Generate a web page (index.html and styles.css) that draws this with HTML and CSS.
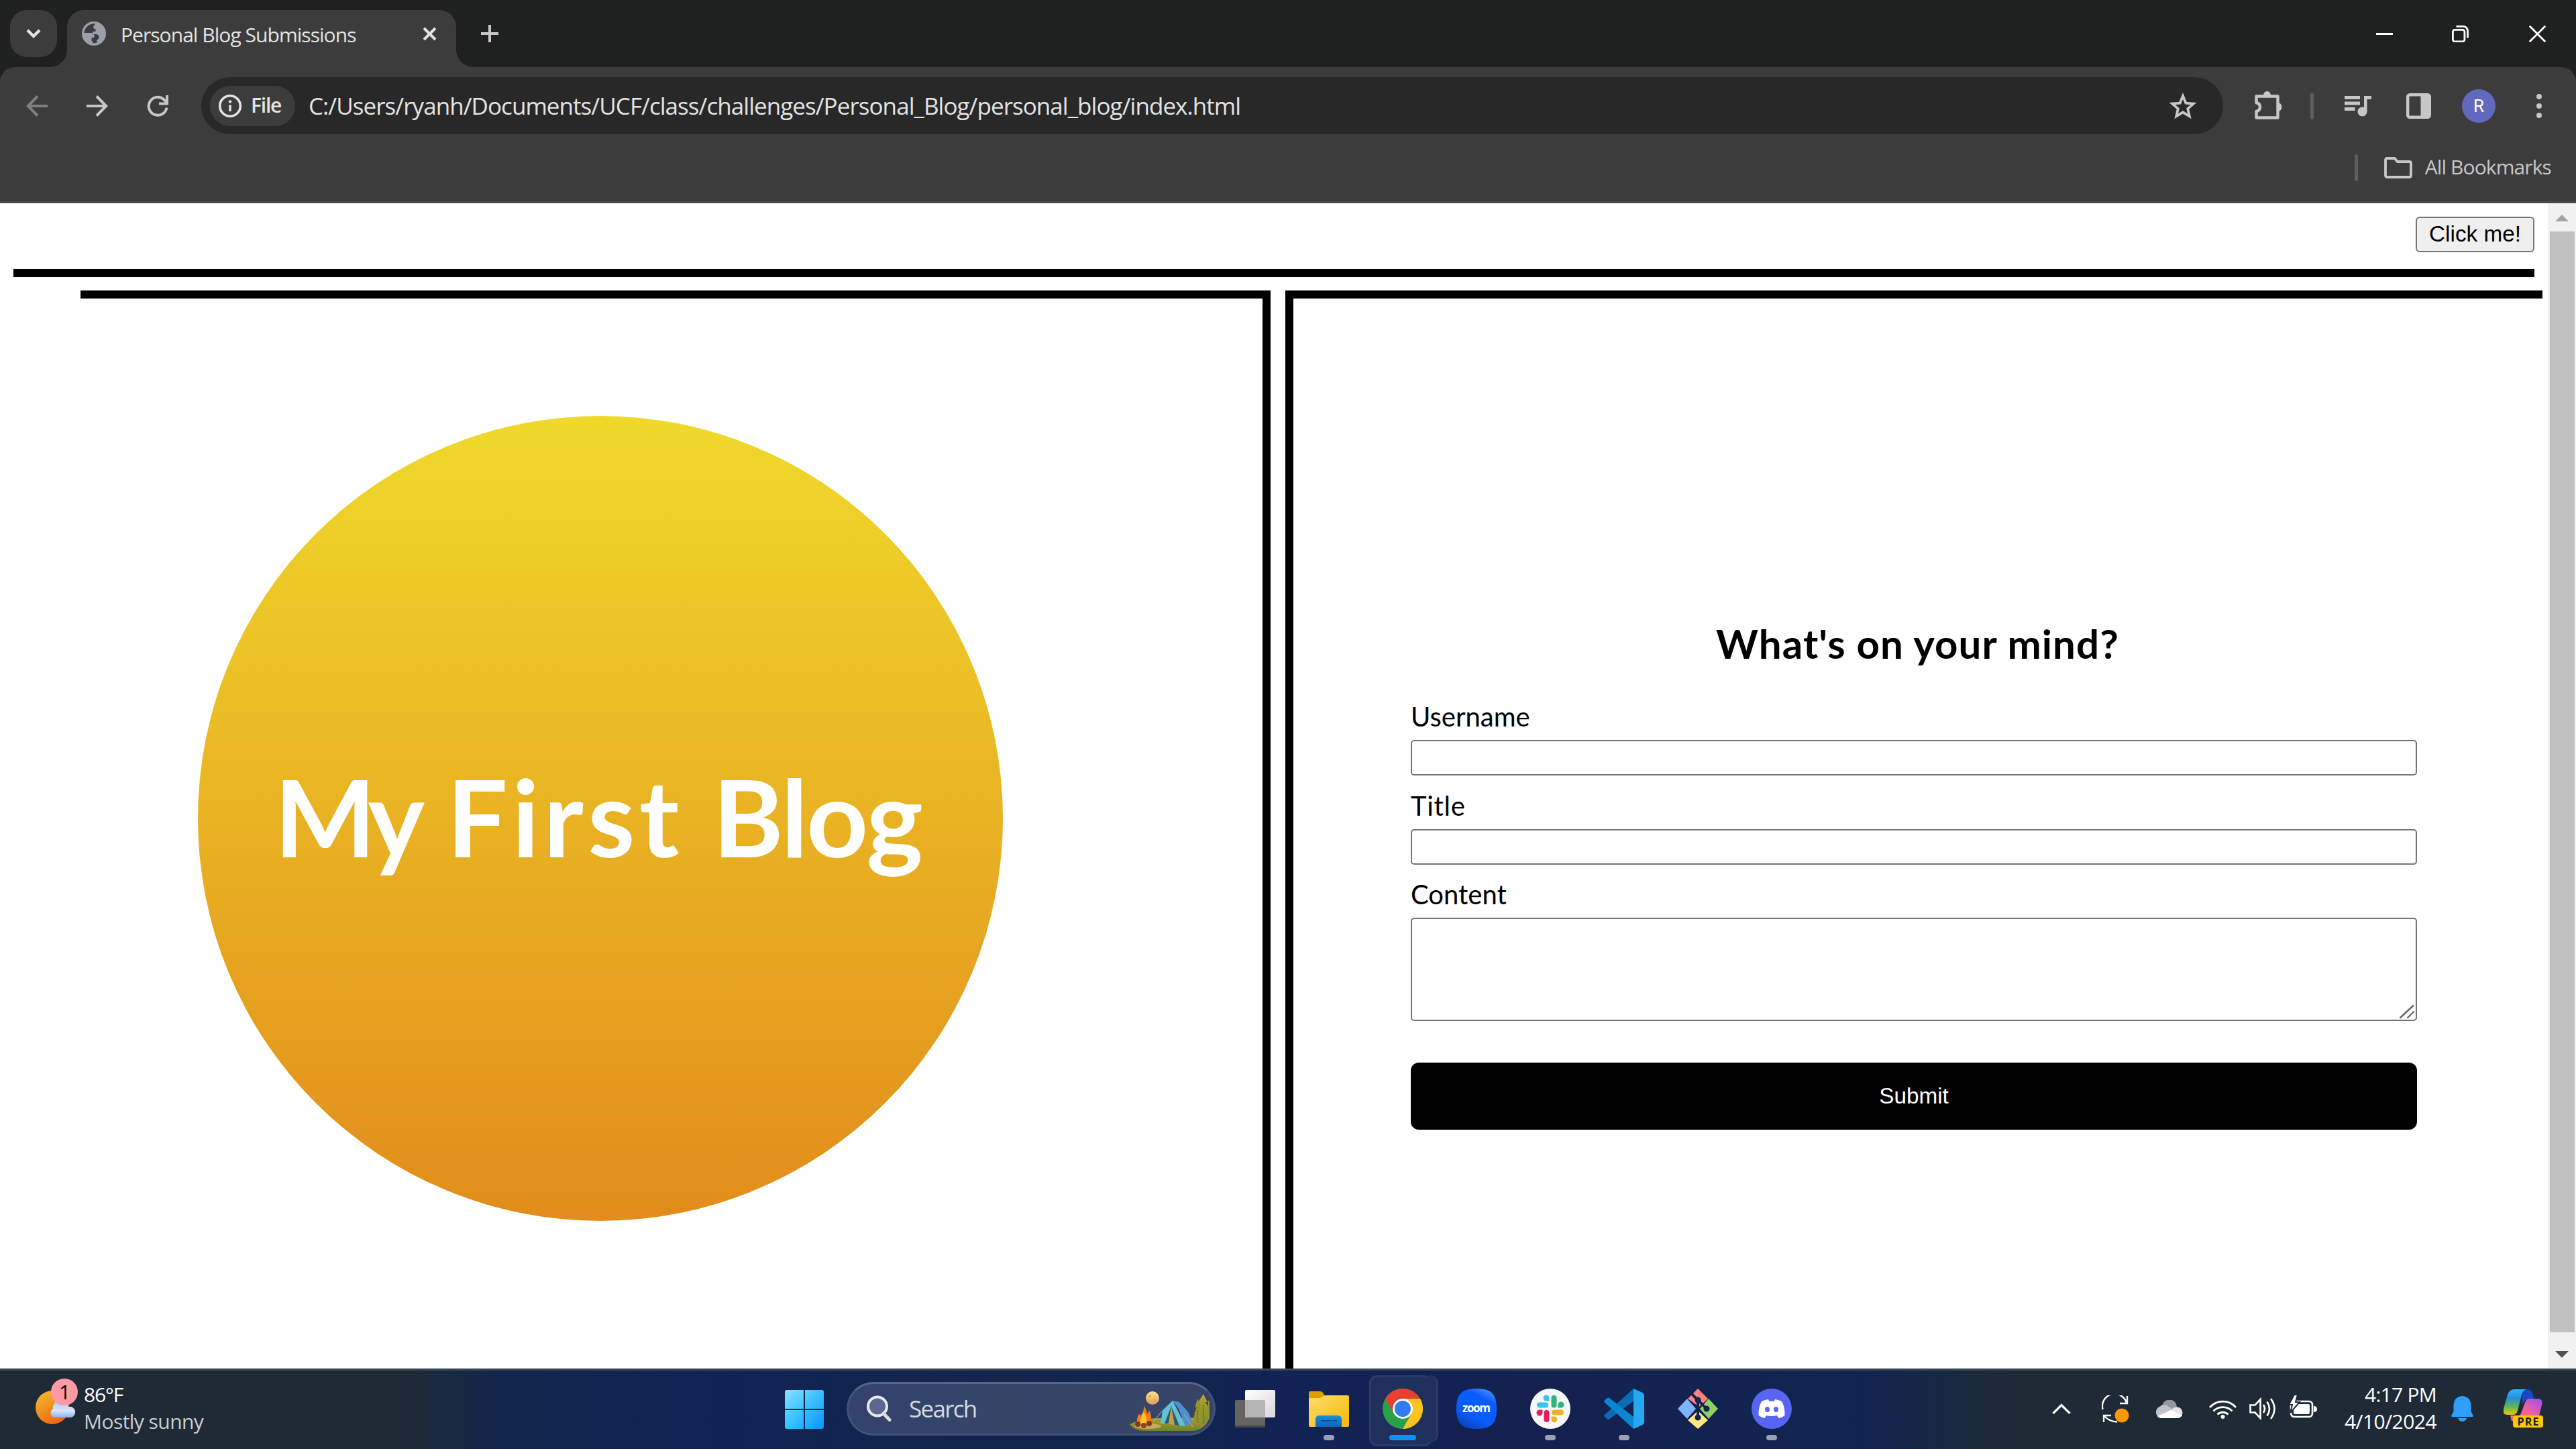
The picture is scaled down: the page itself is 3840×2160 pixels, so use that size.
FILE: index.html
```html
<!DOCTYPE html>
<html lang="en">
<head>
<meta charset="utf-8">
<title>Personal Blog Submissions</title>
<link rel="stylesheet" href="styles.css">
</head>
<body>
<div class="tabstrip">
  <div class="tab-search"><svg width="24" height="18" viewBox="0 0 24 18"><path d="M3 4l9 9 9-9" fill="none" stroke="#e3e3e3" stroke-width="4.4"/></svg></div>
  <div class="tab">
    <svg class="globe" width="36" height="36" viewBox="0 0 36 36"><circle cx="18" cy="18" r="18" fill="#9aa0a8"/><path d="M20 3.5A14.500 14.500 0 0 0 3.500 17h9c4 0 6 2 6 5v2h-4v4.500l3 4c2 0 4-.5 5.500-1.200l-1-3.300c2.500-1 4-3 3.500-5.500-.5-2-2-3-4-3.500h-5.500v-4h4.500V11h-1c-2 0-3-2-2-4z" fill="#3c3c3c"/><path d="M4 18.500h8c3 0 4.500 1.500 4.500 4h-4v5.500l3.500 4.500A14.500 14.500 0 0 1 4 18.500z" fill="#9aa0a8"/></svg>
    <span class="tab-title">Personal Blog Submissions</span>
    <svg class="tab-close" width="21" height="21" viewBox="0 0 21 21"><path d="M2 2l17 17M19 2L2 19" stroke="#e3e3e3" stroke-width="4"/></svg>
  </div>
  <svg class="new-tab" width="26" height="26" viewBox="0 0 26 26"><path d="M13 0v26M0 13h26" stroke="#c7c7c7" stroke-width="4"/></svg>
  <div class="window-buttons">
    <span class="minimize"><svg width="25" height="25" viewBox="0 0 25 25"><path d="M0 12.500h25" stroke="#fff" stroke-width="3"/></svg></span>
    <span><svg width="25" height="25" viewBox="0 0 25 25" fill="none" stroke="#fff" stroke-width="2.800"><rect x="1.400" y="6.400" width="17.500" height="17.500" rx="3"/><path d="M6.500 1.400H17a6.500 6.500 0 0 1 6.500 6.500V18.500"/></svg></span>
    <span><svg width="25" height="25" viewBox="0 0 25 25"><path d="M.8.8l23.400 23.400M24.200.8L.8 24.200" stroke="#fff" stroke-width="2.800"/></svg></span>
  </div>
</div>
<div class="toolbar">
  <div class="nav-row">
    <span class="tool"><svg width="32" height="32" viewBox="0 0 32 32" fill="none" stroke="#7f7f7f" stroke-width="4"><path d="M32 16H3M17 1.500L2.800 16 17 30.500"/></svg></span>
    <span class="tool"><svg width="32" height="32" viewBox="0 0 32 32" fill="none" stroke="#c7c7c7" stroke-width="4"><path d="M0 16h29M15 1.500L29.200 16 15 30.500"/></svg></span>
    <span class="tool"><svg width="32" height="32" viewBox="0 0 32 32" fill="none" stroke="#c7c7c7" stroke-width="4"><path d="M29.500 18.500A13.500 13.500 0 1 1 25.500 6.500l4 4"/><path d="M30 0v12.500H18"/></svg></span>
    <div class="omnibox">
      <div class="chip">
        <svg width="36" height="36" viewBox="0 0 36 36"><circle cx="18" cy="18" r="15.300" fill="none" stroke="#e3e3e3" stroke-width="3.600"/><path d="M18 16.500v9.500" stroke="#e3e3e3" stroke-width="3.600"/><circle cx="18" cy="11.500" r="2.200" fill="#e3e3e3"/></svg>
        <span>File</span>
      </div>
      <span class="url">C:/Users/ryanh/Documents/UCF/class/challenges/Personal_Blog/personal_blog/index.html</span>
      <svg class="star" width="42" height="40" viewBox="0 0 42 40"><path d="M21 5l4.400 10.600 11.400 1-8.600 7.500 2.600 11.200L21 29.300l-9.800 6 2.600-11.200-8.600-7.500 11.400-1z" fill="none" stroke="#c7c7c7" stroke-width="3.800"/></svg>
    </div>
    <span class="tool puzzle"><svg width="42" height="44" viewBox="0 0 42 44"><path d="M2.500 9.500h32V21v20.500h-32V32c4-1 5.500-3.500 5.500-6.500s-1.500-5.500-5.500-6.500z" fill="none" stroke="#c7c7c7" stroke-width="4.400" stroke-linejoin="round"/><path d="M13 8a5.500 6 0 0 1 11 0zM35 19a5.500 6.500 0 0 1 0 13z" fill="#c7c7c7"/></svg></span>
    <i class="divider"></i>
    <span class="tool"><svg width="40" height="32" viewBox="0 0 40 32" fill="#c7c7c7"><path d="M0 1h23v5H0zM0 9.500h23v5H0zM0 18h15.500v5H0zM29 1h11v5h-6.500v18H29z"/><circle cx="26.500" cy="24.500" r="7"/></svg></span>
    <span class="tool"><svg width="37" height="38" viewBox="0 0 37 38"><rect x="2.200" y="2.200" width="32.600" height="33.600" rx="3" fill="none" stroke="#c7c7c7" stroke-width="4.400"/><path d="M21.500 2h13v34h-13z" fill="#c7c7c7"/></svg></span>
    <span class="tool"><span class="avatar">R</span></span>
    <span class="tool"><svg width="8" height="36" viewBox="0 0 8 36" fill="#c7c7c7"><circle cx="4" cy="4" r="4"/><circle cx="4" cy="18" r="4"/><circle cx="4" cy="32" r="4"/></svg></span>
  </div>
  <div class="bookmarks">
    <i class="divider"></i>
    <svg width="42" height="32" viewBox="0 0 42 32"><path d="M2 4.500Q2 2 4.500 2h11l4.500 5h17.500Q40 7 40 9.500v18q0 2.500-2.500 2.500h-33Q2 30 2 27.500z" fill="none" stroke="#c7c7c7" stroke-width="3.800"/></svg>
    <span>All Bookmarks</span>
  </div>
</div>
<div class="viewport">
  <div class="page">
    <header class="page-header"><button class="mode">Click me!</button></header>
    <main class="columns">
      <section class="hero"><div class="circle"><h1><span class="w1">My</span> <span class="w2">First</span> <span class="w3">Blog</span></h1></div></section>
      <section class="form">
        <h2>What's on your mind?</h2>
        <label for="user">Username</label>
        <input id="user" type="text">
        <label for="title" class="ls-title">Title</label>
        <input id="title" type="text">
        <label for="content">Content</label>
        <div class="area"><textarea id="content"></textarea><svg width="24" height="22" viewBox="0 0 24 22"><path d="M1.500 20.500L22 1.500M12.500 20.500L23 10.500" stroke="#666" stroke-width="2.400"/></svg></div>
        <button class="submit">Submit</button>
      </section>
    </main>
  </div>
  <div class="scrollbar">
    <svg width="20" height="10" viewBox="0 0 20 10"><path d="M10 0l10 10H0z" fill="#a3a3a3"/></svg>
    <div class="thumb"></div>
    <svg width="20" height="10" viewBox="0 0 20 10"><path d="M0 0h20L10 10z" fill="#505050"/></svg>
  </div>
</div>
<div class="taskbar">
  <div class="weather">
    <svg width="70" height="80" viewBox="0 0 70 80">
      <defs><linearGradient id="sun" x1="0" y1="0" x2=".6" y2="1"><stop offset="0" stop-color="#f0c232"/><stop offset="1" stop-color="#f06410"/></linearGradient><linearGradient id="cl" x1="0" y1="0" x2="0" y2="1"><stop offset="0" stop-color="#a8c4f4"/><stop offset=".6" stop-color="#dbe6fa"/><stop offset="1" stop-color="#8fb0ee"/></linearGradient></defs>
      <circle cx="28" cy="48" r="25" fill="url(#sun)"/>
      <path d="M30 63a7.500 7.500 0 0 1-1-13 11 11 0 0 1 23-3 8 8 0 0 1 4 16z" fill="url(#cl)"/>
      <circle cx="46" cy="25" r="20" fill="#ff9aa4"/>
      <text x="38" y="36" class="badge">1</text>
    </svg>
    <div class="lines"><span class="temp">86°F</span><span class="cond">Mostly sunny</span></div>
  </div>
  <svg class="start" width="58" height="58" viewBox="0 0 58 58"><defs><linearGradient id="wn" x1="0" y1="0" x2="1" y2="1"><stop offset="0" stop-color="#8ae0ff"/><stop offset=".45" stop-color="#3fc4ff"/><stop offset="1" stop-color="#0a94ff"/></linearGradient></defs><path d="M3 0h25v28H0V3Q0 0 3 0zM30 0h25q3 0 3 3v25H30zM0 30h28v28H3q-3 0-3-3zM30 30h28v25q0 3-3 3H30z" fill="url(#wn)"/></svg>
  <div class="search">
    <svg width="38" height="40" viewBox="0 0 38 40"><circle cx="17" cy="16.500" r="14" fill="#5a6890" stroke="#e8eaf0" stroke-width="4"/><path d="M26 27l9 9.500" stroke="#d8dbe4" stroke-width="5" stroke-linecap="round"/></svg>
    <span>Search</span>
    <svg class="art" width="132" height="76" viewBox="0 2 132 76">
      <defs><linearGradient id="gr" x1="0" y1="0" x2="0" y2="1"><stop offset="0" stop-color="#b89a3c"/><stop offset="1" stop-color="#6a8428"/></linearGradient><linearGradient id="tr" x1="0" y1="0" x2="0" y2="1"><stop offset="0" stop-color="#b0a42c"/><stop offset="1" stop-color="#7d8c2c"/></linearGradient><linearGradient id="mo" x1="0" y1="0" x2="0" y2="1"><stop offset="0" stop-color="#ffe08a"/><stop offset="1" stop-color="#e09a60"/></linearGradient></defs>
      <circle cx="39" cy="24" r="10" fill="url(#mo)"/><circle cx="35" cy="21" r="2" fill="#dca858"/><circle cx="43" cy="28" r="2" fill="#dca858"/>
      <path d="M5 63Q24 54 50 54t74-1Q120 64 112 69 106 73 98 73H28Q12 73 5 63z" fill="url(#gr)"/>
      <ellipse cx="32" cy="66" rx="20" ry="4" fill="#c8a860"/>
      <path d="M115 18l6 12h-3l6 12h-1l1 8q-2 7-7 12l-17-2 2-8h-2l6-11h-2l5-11h-2z" fill="url(#tr)"/>
      <path d="M106 25l5 10h-2l4 9h-2l3 16h-14l2-13h-1l4-9h-3zM122 28l2 0v26l-4-2z" fill="#929328"/>
      <path d="M115 62V34M106 60V42" stroke="#6e7a1c" stroke-width="1.500"/>
      <path d="M26 35q5 8 5 13 3-3 3-6 5 10 2 17l-5 6H20q-5-4-4-10 1-5 4-8l1 4q6-8 5-16z" fill="#f57a14"/><path d="M26 45q6 9 4 17h-9q-1-9 5-17z" fill="#ffc22e"/>
      <circle cx="17" cy="63" r="4" fill="#7c3d1c"/><circle cx="26" cy="65" r="4" fill="#8a4520"/><circle cx="34" cy="62" r="4" fill="#7c3d1c"/>
      <path d="M69 28l-15 14-3 19 6 1 13-22 10 25 8 1z" fill="#3fb0c8"/><path d="M69 28l10 2 14 16 5 14-10 6-10-26z" fill="#4a90cc"/><path d="M69 28l19 38-12-2-9-28-10 27-6-1 4-20z" fill="#62c0d8"/><path d="M67 36L57 62l22 3z" fill="#c0a04c"/><path d="M67 36l-10 26 6 0zM67 36l5 28 7 1z" fill="#2c5c70"/>
      <path d="M54 43L40 59M86 48l13 19" stroke="#aeb4b8" stroke-width="1"/>
    </svg>
  </div>
  <div class="apps">
    <span class="app"><svg width="60" height="56" viewBox="0 0 60 56"><defs><linearGradient id="tv" x1="0" y1="0" x2="1" y2="1"><stop offset="0" stop-color="#fff"/><stop offset="1" stop-color="#d9d9d9"/></linearGradient></defs><rect y="15" width="45" height="41" rx="2" fill="#646464"/><path d="M0 53h45v1q0 2-2 2H2q-2 0-2-2z" fill="#484848"/><rect x="15" width="45" height="41" rx="2" fill="url(#tv)"/><path d="M15 15h28q2 0 2 2v24H17q-2 0-2-2z" fill="#b4b4b4"/></svg></span>
    <span class="app"><svg width="60" height="53" viewBox="0 0 60 53"><defs><linearGradient id="fx" x1="0" y1="0" x2="1" y2="1"><stop offset="0" stop-color="#ffdc70"/><stop offset="1" stop-color="#f8b808"/></linearGradient><linearGradient id="fb" x1="0" y1="0" x2="0" y2="1"><stop offset="0" stop-color="#1890dc"/><stop offset="1" stop-color="#0a64b8"/></linearGradient></defs><path d="M0 2q0-2 2-2h15q3 0 4.500 2.500L24 7v10H0z" fill="#e0a000"/><path d="M0 12q0-2 2-2h13q3 0 5-2t5-2h33q2 0 2 2v43q0 2-2 2H2q-2 0-2-2z" fill="url(#fx)"/><path d="M10 53V42q0-6 6-6h27q6 0 6 6v11z" fill="url(#fb)"/><path d="M18 44h24" stroke="#0a4f94" stroke-width="2"/></svg><i class="run"></i></span>
    <span class="app active"><svg width="60" height="60" viewBox="0 0 60 60"><circle cx="30" cy="30" r="30" fill="#2aa04a"/><path d="M30 60A30 30 0 0 0 56 15H30l13 22.500z" fill="#fcc419"/><path d="M4 15A30 30 0 0 1 56 15H30A15 15 0 0 0 17 37.500z" fill="#e83f33"/><circle cx="30" cy="30" r="15" fill="#fff"/><circle cx="30" cy="30" r="12" fill="#2f7df0"/></svg><i class="run"></i></span>
    <span class="app"><svg width="60" height="60" viewBox="0 0 60 60"><defs><linearGradient id="zm" x1=".8" y1="0" x2=".3" y2="1"><stop offset="0" stop-color="#4a90ff"/><stop offset=".25" stop-color="#0b5cff"/><stop offset=".7" stop-color="#0b5cff"/><stop offset="1" stop-color="#0845b8"/></linearGradient></defs><path d="M30 0c22 0 30 8 30 30s-8 30-30 30S0 52 0 30 8 0 30 0z" fill="url(#zm)"/><text x="30" y="34.500" class="zoom" text-anchor="middle" textLength="42">zoom</text></svg></span>
    <span class="app"><svg width="60" height="60" viewBox="0 0 60 60"><circle cx="30" cy="30" r="30" fill="#f7f7f7"/><g stroke-width="8" stroke-linecap="round"><path d="M14 24.500h9" stroke="#36c5f0"/><path d="M35.500 14v10.500" stroke="#2eb67d"/><path d="M36 35.500h10" stroke="#ecb22e"/><path d="M24.500 36v10" stroke="#e01e5a"/></g><path d="M28.500 18.500h-4.500a4.500 4.500 0 1 1 4.500-4.500z" fill="#36c5f0"/><path d="M41.500 28.500v-4.500a4.500 4.500 0 1 1 4.500 4.500z" fill="#2eb67d"/><path d="M31.500 41.500h4.500a4.500 4.500 0 1 1-4.500 4.500z" fill="#ecb22e"/><path d="M18.500 31.500v4.500a4.500 4.500 0 1 1-4.500-4.500z" fill="#e01e5a"/></svg><i class="run"></i></span>
    <span class="app"><svg width="60" height="60" viewBox="0 0 60 60"><path d="M44 0L1 39q-1.500 1.500 0 3l4 3.500q1.500 1 3 0L46 17z" fill="#0a6cb4"/><path d="M44 60L1 20.500q-1.500-1.500 0-3L5 14q1.500-1 3 0l38 29.500z" fill="#0a87d0"/><path d="M44 0l13.500 6Q60 7.500 60 10v40q0 2.500-2.500 4L44 60z" fill="#24a8f2"/></svg><i class="run"></i></span>
    <span class="app"><svg width="60" height="60" viewBox="0 0 60 60"><path d="M30 0l15 15-13 12-17-12z" fill="#ff8080"/><path d="M0 30l14-15 13 15-13 15z" fill="#80b3ff"/><path d="M46 15l14 15-14 15-13-15z" fill="#8dd35f"/><path d="M30 33l15 14-15 13-15-13z" fill="#ffe680"/><path d="M21 8l9 9v28M30 17l13 13v0" fill="none" stroke="#12234e" stroke-width="4"/><circle cx="30" cy="17" r="4.500" fill="#12234e"/><circle cx="43" cy="30" r="4.500" fill="#12234e"/><circle cx="30" cy="43" r="4.500" fill="#12234e"/></svg></span>
    <span class="app"><svg width="60" height="60" viewBox="0 0 60 60"><circle cx="30" cy="30" r="30" fill="#5865f2"/><path d="M25 16q-5 .5-10 3-5 9-4.500 21 4 3 9 4l2.500-4q8 2 16 0l2.500 4q5-1 9-4 .5-12-4.500-21-5-2.500-10-3l-1.500 3q-3.500-.5-7 0z" fill="#fff"/><ellipse cx="23.500" cy="31" rx="3.500" ry="4" fill="#5865f2"/><ellipse cx="36.500" cy="31" rx="3.500" ry="4" fill="#5865f2"/></svg><i class="run"></i></span>
  </div>
  <div class="tray">
    <svg class="caret" width="28" height="16" viewBox="0 0 28 16"><path d="M1.500 15L14 2.500 26.500 15" fill="none" stroke="#fff" stroke-width="3.200"/></svg>
    <svg class="sync" width="41" height="41" viewBox="0 0 41 41" fill="none" stroke="#fff" stroke-width="2.400"><path d="M1.500 21A17.500 17.500 0 0 1 37 11.500M38 1v11H27M3 40V30h11M4 31q7 8 19 8.500"/><circle cx="30" cy="30" r="10.500" fill="#ff9800" stroke="none"/></svg>
    <svg class="cloud" width="41" height="27" viewBox="0 0 41 27"><path d="M10 10a11 11 0 0 1 22 1L22 18z" fill="#94989c"/><path d="M9 27a9 9 0 0 1-2-17.500q4-4 10-1.500l12 8-18 11z" fill="#bfc2c6"/><path d="M22 17q4-7 10-6.500a8.200 8.200 0 0 1 .5 16.500H20z" fill="#e2e4e6"/><path d="M3 24l20-9 17 8q-3 4-8 4H9q-4 0-6-3z" fill="#fff"/></svg>
    <svg class="wifi" width="41" height="29" viewBox="0 0 41 29" fill="none" stroke="#fff" stroke-width="2.800"><path d="M1 12A26 26 0 0 1 40 12M6.500 17.500a19.500 19.500 0 0 1 28 0M12.500 22.500a11.500 11.500 0 0 1 16 0"/><circle cx="20.500" cy="26" r="3" fill="#fff" stroke="none"/></svg>
    <svg class="speaker" width="41" height="34" viewBox="0 0 41 34" fill="none" stroke="#fff" stroke-width="2.600"><path d="M1.500 11.500h7l8-8.500v28l-8-8.500h-7zM21 11q4 6 0 12M26.500 6.500q7 10.500 0 21M32 2q11 15 0 30"/></svg>
    <svg class="battery" width="41" height="34" viewBox="0 0 41 34"><rect x="2" y="9" width="32" height="23" rx="5" fill="none" stroke="#fff" stroke-width="2.600"/><rect x="6" y="13" width="24" height="15" rx="2" fill="#fff"/><path d="M36 16q5 0 5 4.500T36 25z" fill="#fff"/><path d="M7-1L-1 14h5L1 26l14-16H9l3-11z" fill="#fff" stroke="#1e2b37" stroke-width="2"/></svg>
    <div class="clock"><span class="time">4:17 PM</span><span class="date">4/10/2024</span></div>
    <svg class="bell" width="33" height="38" viewBox="0 0 33 38" fill="#2ea0fc"><path d="M16.500 0Q29 1 29.500 14v9l3.500 6.500q0 1.500-2 1.500H2q-2 0-2-1.500L3.500 23v-9Q4 1 16.500 0zM10 33h13q-1.500 5-6.500 5T10 33z"/></svg>
    <svg class="copilot" width="60" height="58" viewBox="0 0 60 58"><defs><linearGradient id="ca" x1="0" y1="0" x2="0" y2="1"><stop offset="0" stop-color="#28b8f4"/><stop offset=".35" stop-color="#2490d8"/><stop offset=".7" stop-color="#64b84c"/><stop offset="1" stop-color="#ecc40c"/></linearGradient><linearGradient id="cb" x1="1" y1="0" x2="0" y2="1"><stop offset="0" stop-color="#9a50f4"/><stop offset=".5" stop-color="#f0609c"/><stop offset="1" stop-color="#fc7848"/></linearGradient></defs><path d="M28 0h8q5 0 7 6l3 9h-9q-6 0-9 8z" fill="#1646c8"/><path d="M38 14h13q8 0 6 9l-4 17q-3 7-9 7H12l-2-8h12q3 0 4-3l6-16q2-6 6-6z" fill="url(#cb)"/><path d="M16 0h18q-5 1-7 8l-6 24q-2 6-7 6H6q-8 0-6-9L6 8q3-8 10-8z" fill="url(#ca)"/><rect x="14" y="39" width="45" height="18" rx="4" fill="#ffc800"/><text x="36.500" y="53.500" class="pre" text-anchor="middle" textLength="32">PRE</text></svg>
  </div>
</div>
</body>
</html>
```
FILE: styles.css
```css
* { box-sizing: border-box; }
html, body { margin: 0; width: 3840px; height: 2160px; overflow: hidden; }
body {
  display: flex;
  flex-direction: column;
  font-family: "Open Sans", "Noto Sans", sans-serif;
  background: #1f2120;
}
svg { display: block; flex: none; }
button, input, textarea, h1, h2 { margin: 0; padding: 0; }

/* Tab strip */
.tabstrip { display: flex; height: 100px; padding-left: 15px; background: #1f2120; flex: none; }
.tab-search {
  width: 70px; height: 70px; margin-top: 15px; border-radius: 25px;
  background: #3c3c3c; display: flex; align-items: center; justify-content: center;
}
.tab {
  position: relative; width: 580px; height: 85px; margin: 15px 0 0 15px; padding: 0 29px 15px 22px;
  background: #3c3c3c; border-radius: 25px 25px 0 0; display: flex; align-items: center;
}
.tab::before, .tab::after { content: ""; position: absolute; bottom: 0; width: 25px; height: 25px; }
.tab::before { left: -25px; background: radial-gradient(circle at 0 0, transparent 24.5px, #3c3c3c 25px); }
.tab::after { right: -25px; background: radial-gradient(circle at 100% 0, transparent 24.5px, #3c3c3c 25px); }
.tab-title { margin-left: 22px; padding-top: 4px; font-size: 30px; line-height: 40px; letter-spacing: -.96px; color: #e3e3e3; white-space: nowrap; }
.tab-close { margin-left: auto; }
.new-tab { margin: 37px 0 0 37px; }
.window-buttons { display: flex; margin-left: auto; }
.window-buttons span { width: 115px; height: 100px; display: flex; align-items: center; justify-content: center; }
.window-buttons .minimize { padding-left: 4px; }

/* Toolbar */
.toolbar { height: 203px; background: #3c3c3c; border-radius: 22px 22px 0 0; border-bottom: 3px solid #474a49; flex: none; }
.nav-row { display: flex; align-items: center; height: 115px; padding: 0 10px; }
.tool { width: 90px; display: flex; justify-content: center; flex: none; }
.omnibox { display: flex; align-items: center; width: 3015px; height: 85px; margin-left: 20px; padding: 0 39px 0 13px; border-radius: 43px; background: #282828; }
.chip { display: flex; align-items: center; width: 127px; height: 60px; padding-left: 12px; border-radius: 30px; background: #3c3c3c; }
.chip span { margin-left: 13px; font-size: 30px; font-weight: 600; line-height: 40px; letter-spacing: -1.2px; color: #e3e3e3; padding-bottom: 1px; }
.url { margin-left: 20px; font-size: 35px; line-height: 48px; letter-spacing: -.95px; color: #e3e3e3; white-space: nowrap; }
.star { margin-left: auto; }
.puzzle { margin: 0 17px 4px 23px; }
.divider { width: 5px; height: 40px; border-radius: 3px; background: #5e5e5e; flex: none; margin-right: 21px; }
.avatar { width: 50px; height: 50px; border-radius: 50%; background: #6169bf; color: #fff; font: 26px/50px Roboto, sans-serif; text-align: center; }
.bookmarks { display: flex; align-items: center; justify-content: flex-end; height: 70px; padding-right: 37px; }
.bookmarks .divider { margin-right: 39px; }
.bookmarks span { margin-left: 19px; padding-bottom: 2px; font-size: 30px; line-height: 40px; letter-spacing: -.9px; color: #c7c7c7; white-space: nowrap; }

/* Web page */
.viewport { display: flex; height: 1737px; background: #fff; flex: none; }
.page { width: 3798px; display: flex; flex-direction: column; }
.page-header { display: flex; justify-content: flex-end; height: 110px; margin: 0 20px; padding-top: 20px; border-bottom: 12px solid #000; flex: none; }
.mode { width: 177px; height: 53px; border: 2px solid #767676; border-radius: 6px; background: #efefef; color: #000; font: 33.3px/47px "Liberation Sans", sans-serif; padding-bottom: 2px; white-space: nowrap; }
.columns { display: flex; gap: 22px; flex: 1; margin: 20px 8px 0 120px; min-height: 0; }
.hero { width: 1774px; padding: 175px; border: solid #000; border-width: 12px 12px 0 0; flex: none; }
.circle { width: 1200px; height: 1200px; border-radius: 50%; background: linear-gradient(#f0d92b, #e28c1b); display: flex; align-items: center; justify-content: center; }
h1 { font: 700 160px/200px Lato, "Open Sans", sans-serif; letter-spacing: .5px; color: #fff; white-space: nowrap; margin: -9px 7px 0 0; }
.w1 { letter-spacing: -10px; margin-right: 4px; }
.w2 { letter-spacing: 6.5px; margin-right: 4px; }
.w3 { letter-spacing: -2px; }
.form { flex: 1; display: flex; flex-direction: column; padding: 474px 187px 0 175px; border: solid #000; border-width: 12px 0 0 12px; font-family: Lato, "Open Sans", sans-serif; color: #000; }
.form h2 { font-size: 60px; line-height: 80px; letter-spacing: 1.1px; text-align: center; margin: 0 0 44px 11px; }
.form label { font-size: 40px; line-height: 50px; }
.form .ls-title { letter-spacing: .7px; }
.form input { height: 53px; margin: 10px 0 19.5px; border: 2px solid #767676; border-radius: 5px; background: #fff; }
.area { position: relative; height: 154px; margin-top: 10px; }
.area textarea { display: block; width: 100%; height: 154px; border: 2px solid #767676; border-radius: 5px; resize: none; background: #fff; }
.area svg { position: absolute; right: 3px; bottom: 3px; }
.submit { height: 100px; margin-top: 62px; border: 0; border-radius: 12px; background: #000; color: #fff; font: 33.3px/100px "Liberation Sans", sans-serif; }
.scrollbar { width: 42px; background: #f1f1f1; display: flex; flex-direction: column; align-items: center; padding: 17px 0 16px; }
.thumb { width: 37px; height: 1641px; margin: 15px 0 28px; background: #c1c1c1; }

/* Taskbar */
.taskbar {
  display: flex; height: 120px; flex: none; border-top: 3px solid #3a4756;
  background: linear-gradient(90deg, #1e2b36 0, #1e2b37 610px, #12264c 740px, #102354 1080px, #12264b 1500px, #112254 1950px, #142150 2300px, #112450 2780px, #1e2b37 3000px, #1e2b37);
}
.weather { display: flex; width: 1170px; padding: 7px 0 0 50px; }
.badge { font: 30px "Open Sans", sans-serif; fill: #000; }
.lines { display: flex; flex-direction: column; margin: 9px 0 0 5px; font-size: 30px; line-height: 40px; white-space: nowrap; }
.temp { color: #fff; letter-spacing: -1.1px; }
.cond { color: #c9cdd1; letter-spacing: -.55px; }
.start { margin-top: 29px; }
.search { display: flex; align-items: center; width: 550px; height: 80px; margin: 17px 4px 0 34px; padding: 0 0 0 26px; border: 3px solid #43527a; border-top-color: #56648a; border-radius: 40px; background: linear-gradient(90deg, #33426e, #334668 40%, #364367); overflow: hidden; }
.search span { margin-left: 26px; font-size: 35px; letter-spacing: -1.7px; line-height: 46px; color: #d5d9e2; }
.art { margin-left: auto; margin-right: -2px; }
.apps { display: flex; width: 880px; }
.app { position: relative; width: 110px; height: 114px; display: flex; align-items: center; justify-content: center; }
.app svg { position: relative; }
.run { position: absolute; left: 47px; top: 96px; width: 16px; height: 8px; border-radius: 4px; background: #9a9fb4; }
.active::before { content: ""; position: absolute; left: 5px; top: 7px; width: 88px; height: 100px; border: 3px solid #2b3a66; border-radius: 12px; background: #20305c; }
.active::after { content: ""; position: absolute; left: 93px; top: 7px; width: 12px; height: 100px; border-radius: 0 12px 12px 0; background: #20305c; border-right: 3px solid #2b3a66; }
.active .run { left: 35px; width: 40px; background: #0a93ff; }
.tray { display: flex; align-items: center; width: 1144px; height: 114px; padding-left: 363px; }
.sync { margin-left: 46px; }
.cloud { margin-left: 39px; }
.wifi { margin-left: 39px; }
.speaker, .battery { margin-left: 19px; }
.battery { margin-top: -6px; }
.clock { display: flex; flex-direction: column; align-items: flex-end; width: 178px; font-size: 30px; line-height: 40px; color: #fff; white-space: nowrap; margin-top: -2px; }
.time { letter-spacing: -.74px; }
.date { letter-spacing: -.56px; }
.bell { margin-left: 22px; }
.copilot { margin-left: 45px; }
.zoom { font: 700 17px "Open Sans", sans-serif; fill: #fff; }
.pre { font: 700 16px "Open Sans", sans-serif; fill: #1a1a1a; }
```
